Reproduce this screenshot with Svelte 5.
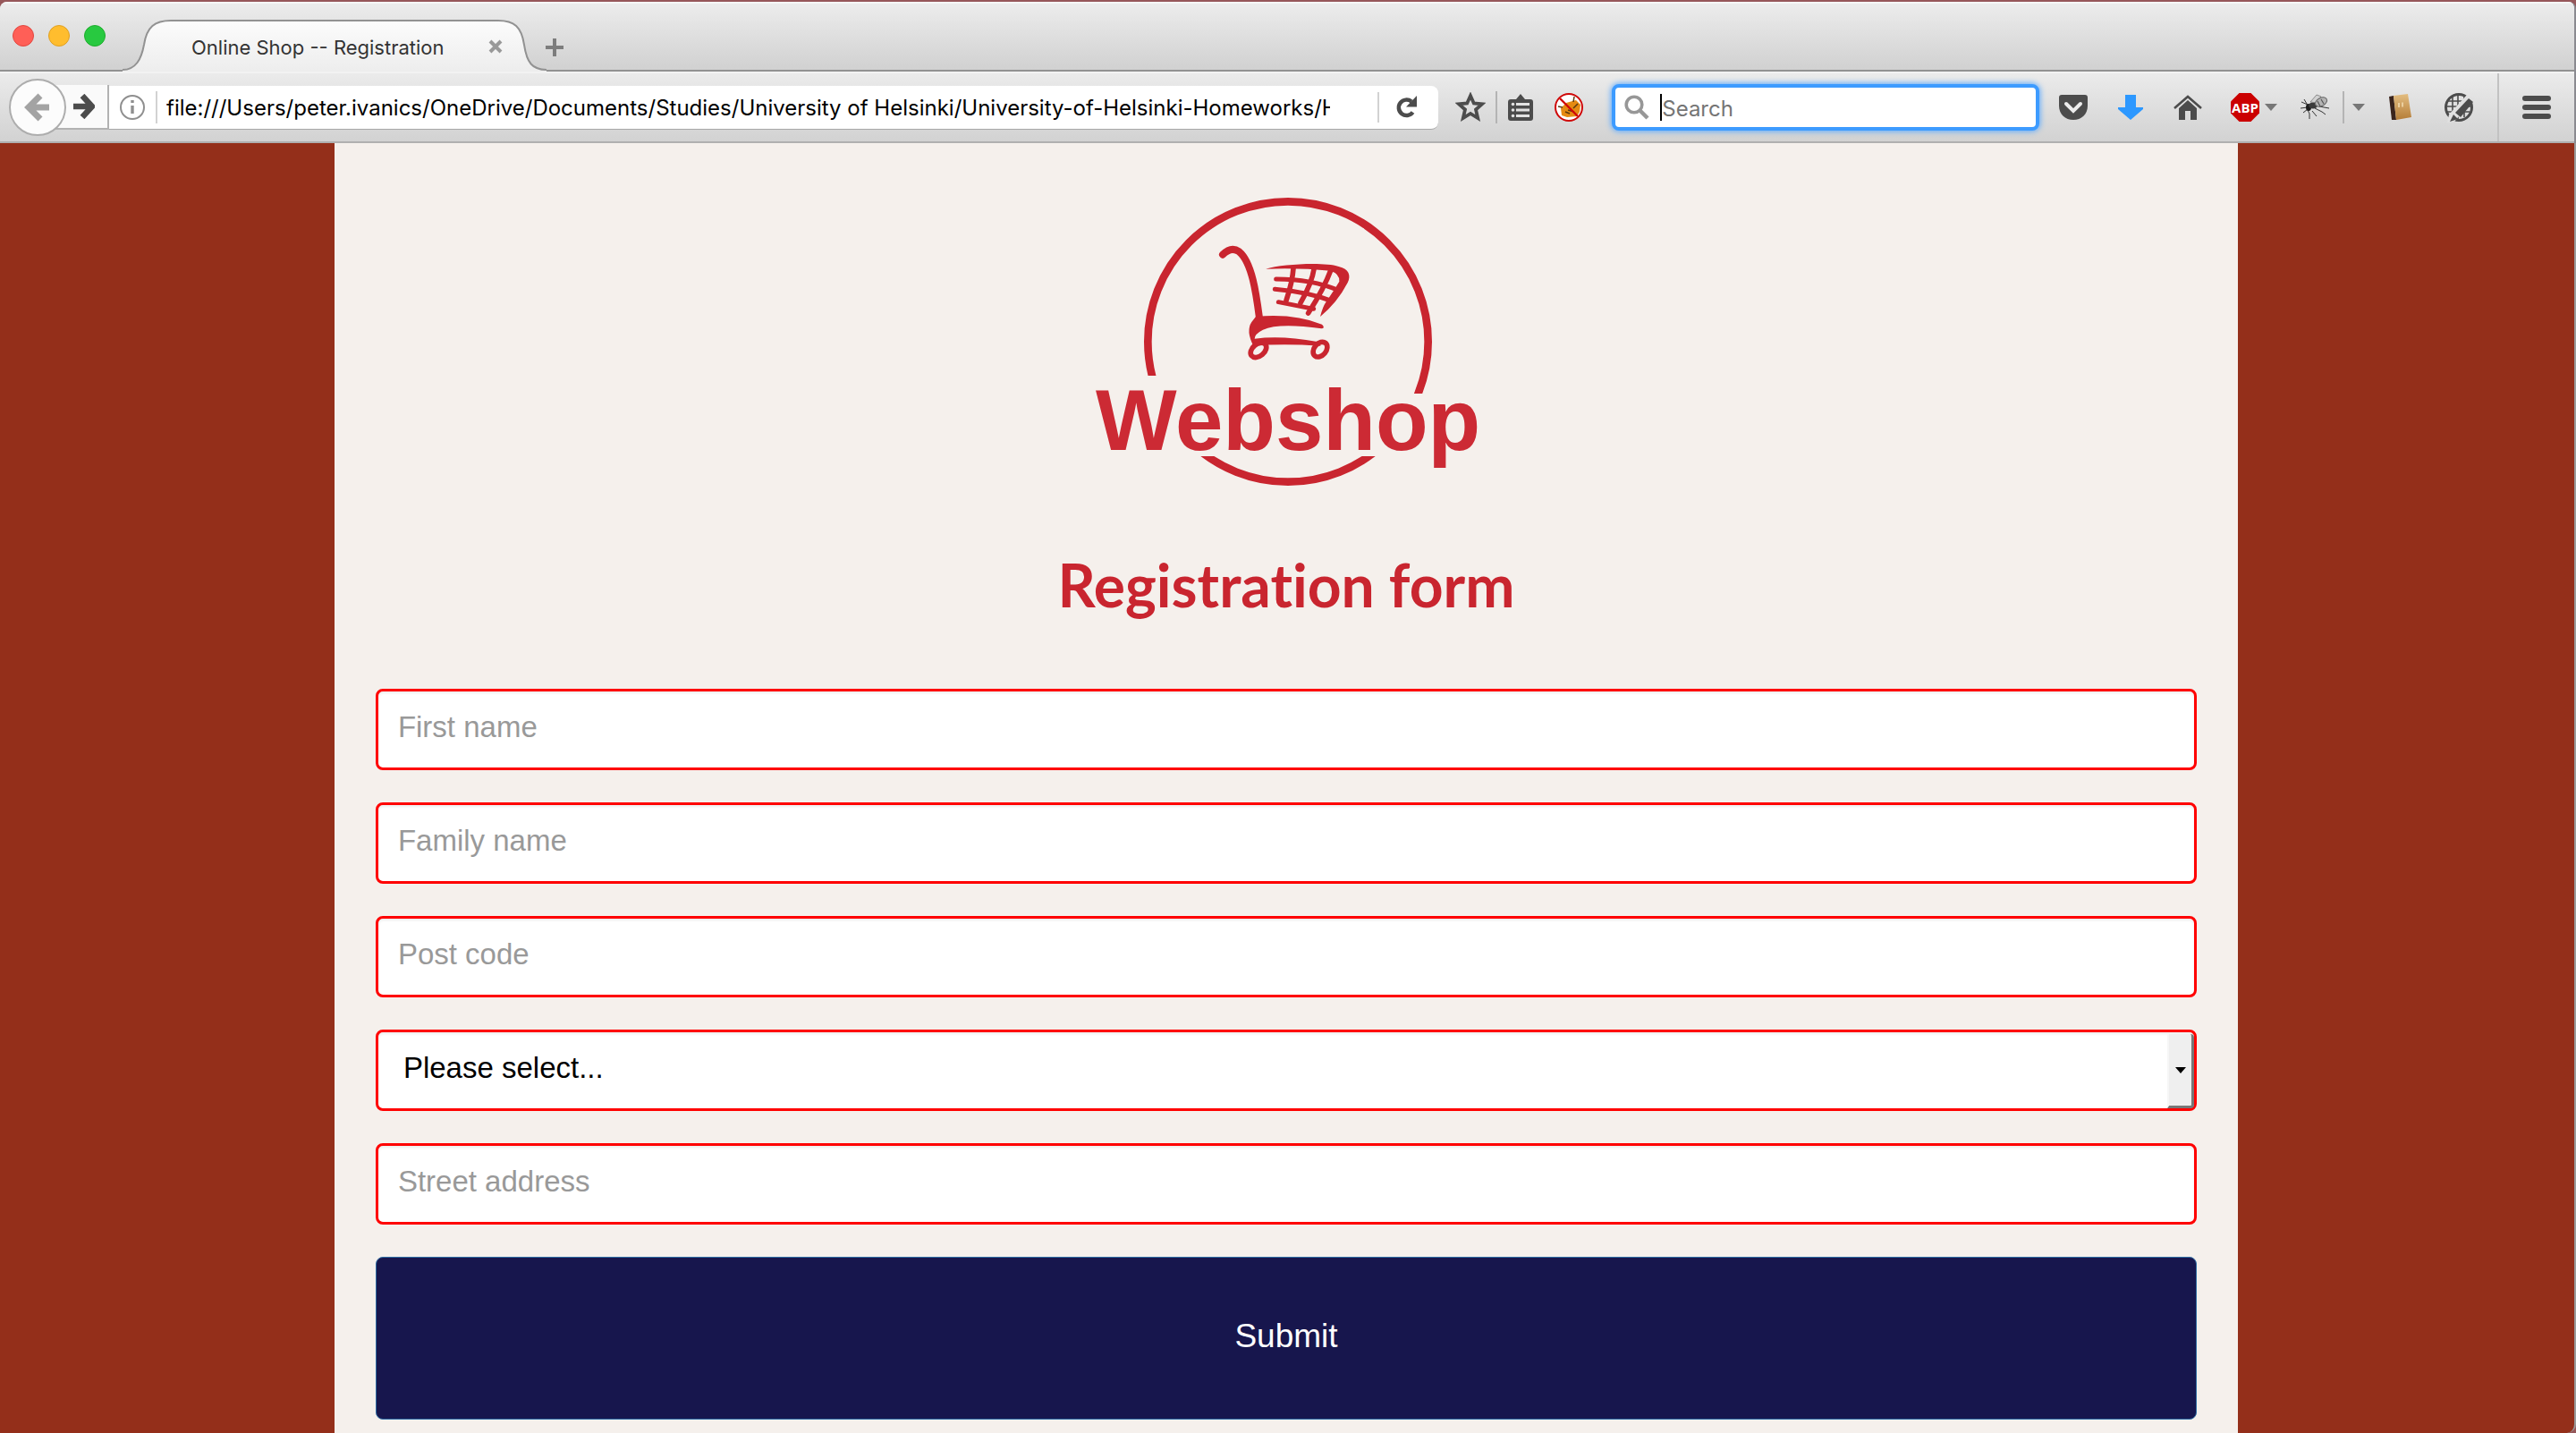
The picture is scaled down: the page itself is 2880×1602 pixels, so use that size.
<script>
  const fields = [
    { id: 'first', label: 'First name', kind: 'text' },
    { id: 'family', label: 'Family name', kind: 'text' },
    { id: 'post', label: 'Post code', kind: 'text' },
    { id: 'choice', label: 'Please select...', kind: 'select' },
    { id: 'street', label: 'Street address', kind: 'text' }
  ];
  const lights = [
    { name: 'Close window', cls: 'red' },
    { name: 'Minimise window', cls: 'amber' },
    { name: 'Zoom window', cls: 'green' }
  ];
  let address = $state(
    'file:///Users/peter.ivanics/OneDrive/Documents/Studies/University of Helsinki/University-of-Helsinki-Homeworks/Homework/registration.html'
  );
</script>

<div class="window">
  <header>
    <div class="tabs">
      <div class="lights">
        {#each lights as l}
          <button class="light {l.cls}" aria-label={l.name}></button>
        {/each}
      </div>
      <div class="tab">
        <svg class="tab-shape" viewBox="0 0 474 58" aria-hidden="true">
          <defs>
            <linearGradient id="tabfill" x1="0" y1="0" x2="0" y2="1">
              <stop offset="0" stop-color="#fcfcfc" />
              <stop offset="1" stop-color="#ededed" />
            </linearGradient>
          </defs>
          <path d="M0 58V56C15 56 21 44 24 28C27 8 36 1 54 1H420C438 1 446 8 449 28C452 48 458 56 474 56V58Z" fill="url(#tabfill)" />
          <path d="M0 56C15 56 21 44 24 28C27 8 36 1 54 1H420C438 1 446 8 449 28C452 48 458 56 474 56" fill="none" stroke="#929292" stroke-width="2" />
        </svg>
        <span class="tab-title">Online Shop -- Registration</span>
        <button class="tab-close" aria-label="Close tab">
          <svg width="16" height="16" viewBox="0 0 16 16"><path d="M2 2L14 14M14 2L2 14" stroke="#999" stroke-width="4" /></svg>
        </button>
      </div>
      <button class="new-tab" aria-label="New tab">
        <svg width="20" height="20" viewBox="0 0 20 20"><path d="M10 0V20M0 10H20" stroke="#7d7d7d" stroke-width="4" /></svg>
      </button>
    </div>

    <nav>
      <button class="back" aria-label="Back">
        <svg width="30" height="32" viewBox="0 0 30 32"><path d="M18 3L5 16L18 29M6 16H28" fill="none" stroke="#a3a3a3" stroke-width="7" /></svg>
      </button>
      <button class="forward" aria-label="Forward">
        <svg width="24" height="28" viewBox="0 0 24 28"><path d="M10 2L21 14L10 26M0 14H19" fill="none" stroke="#4c4c4c" stroke-width="6.5" /></svg>
      </button>
      <div class="url">
        <button class="info" aria-label="Site information">
          <svg width="28" height="28" viewBox="0 0 28 28"><circle cx="14" cy="14" r="13" fill="none" stroke="#8f8f8f" stroke-width="2" /><path d="M14 12V21M14 6V9" stroke="#8f8f8f" stroke-width="3.4" /></svg>
        </button>
        <input aria-label="Address" bind:value={address} />
        <button class="reload" aria-label="Reload">
          <svg width="26" height="26" viewBox="0 0 26 26"><path d="M18 6.5A8.7 8.7 0 1 0 19.5 18.5" fill="none" stroke="#4c4c4c" stroke-width="4.5" /><path d="M24 0V12.500H12Z" fill="#4c4c4c" /></svg>
        </button>
      </div>
      <button class="tool star" aria-label="Bookmark">
        <svg width="34" height="34" viewBox="0 0 34 34"><path d="M17 4L20.800 12.500L30 13.300L23 19.500L25.200 29L17 24L8.800 29L11 19.500L4 13.300L13.200 12.500Z" fill="none" stroke="#4c4c4c" stroke-width="3.800" /></svg>
      </button>
      <span class="rule"></span>
      <button class="tool list" aria-label="Bookmarks list">
        <svg width="28" height="32" viewBox="0 0 28 32"><path d="M3 7H9L14 1L19 7H25Q28 7 28 10V28Q28 31 25 31H3Q0 31 0 28V10Q0 7 3 7Z" fill="#4c4c4c" /><g fill="#e2e2e2"><rect x="9" y="11" width="15" height="3" /><rect x="9" y="17.500" width="15" height="3" /><rect x="9" y="24" width="15" height="3" /><circle cx="5.500" cy="12.500" r="1.800" /><circle cx="5.500" cy="19" r="1.800" /><circle cx="5.500" cy="25.500" r="1.800" /></g></svg>
      </button>
      <button class="tool block" aria-label="Blocked add-on">
        <svg width="32" height="32" viewBox="0 0 32 32"><circle cx="16" cy="16" r="15" fill="#fff" /><path d="M7 17L13 11L20 9L24 8L29 13L28 21L25 26L14 27L8 25Z" fill="#e58a12" /><path d="M4 15L9 16M22 4L21 10M12 21L17 23M21 17L26 12M15 19L22 21" stroke="#5a3a10" stroke-width="1.500" fill="none" /><circle cx="16" cy="16" r="15" fill="none" stroke="#cf0808" stroke-width="2" /><path d="M6 6L26 26" stroke="#cf0808" stroke-width="2.400" /></svg>
      </button>
      <label class="search">
        <svg width="28" height="28" viewBox="0 0 28 28" aria-hidden="true"><circle cx="11" cy="11" r="8.800" fill="none" stroke="#979797" stroke-width="3.600" /><path d="M17 17L26 26" stroke="#979797" stroke-width="4.500" /></svg>
        <span class="caret"></span>
        <input type="search" placeholder="Search" aria-label="Search" />
      </label>
      <button class="tool" aria-label="Pocket">
        <svg width="32" height="28" viewBox="0 0 32 28"><path d="M3 0H29Q32 0 32 3V12C32 22 25 28 16 28S0 22 0 12V3Q0 0 3 0Z" fill="#4c4c4c" /><path d="M8 10L16 18L24 10" fill="none" stroke="#ececec" stroke-width="4" stroke-linecap="round" /></svg>
      </button>
      <button class="tool" aria-label="Downloads">
        <svg width="28" height="28" viewBox="0 0 28 28"><path d="M8 0H20V14H28V16L14 28L0 16V14H8Z" fill="#2d98ff" /></svg>
      </button>
      <button class="tool" aria-label="Home">
        <svg width="32" height="28" viewBox="0 0 32 28"><path d="M1 15L16 2L31 15" fill="none" stroke="#4c4c4c" stroke-width="2.600" /><path d="M16 6L26 15V28H19V18H13V28H6V15Z" fill="#4c4c4c" /></svg>
      </button>
      <button class="tool abp" aria-label="Adblock Plus">
        <svg width="32" height="32" viewBox="0 0 32 32"><path d="M9.500 0H22.500L32 9.500V22.500L22.500 32H9.500L0 22.500V9.500Z" fill="#cb0000" /><text x="16" y="22" text-anchor="middle" class="abp-text">ABP</text></svg>
        <svg width="14" height="8" viewBox="0 0 14 8"><path d="M0 0H14L7 8Z" fill="#777" /></svg>
      </button>
      <button class="tool fly" aria-label="Firebug">
        <svg width="34" height="30" viewBox="0 0 34 30"><g fill="none" stroke="#333" stroke-width="1"><path d="M1 9L8 12M0 16L8 15M3 21L8 17M10 28L10 22L8 18M13 19L18 25M16 16L24 20L28 23M21 14L32 16M7 11L4 6" /></g><ellipse cx="9" cy="15" rx="3" ry="4" fill="#1c1c1c" /><ellipse cx="14" cy="13" rx="5" ry="3.500" fill="#3c3c3c" /><path d="M11 9L18 1L23 3L19 10Z" fill="#d2d2d2" stroke="#777" stroke-width="0.800" /><ellipse cx="23" cy="9" rx="7" ry="4.500" transform="rotate(-28 23 9)" fill="#b4b4b4" stroke="#666" /><path d="M19 8L22 14M23 6L26 11" stroke="#555" stroke-width="1.200" /></svg>
      </button>
      <span class="rule"></span>
      <button class="drop" aria-label="Firebug options">
        <svg width="14" height="8" viewBox="0 0 14 8"><path d="M0 0H14L7 8Z" fill="#777" /></svg>
      </button>
      <button class="tool" aria-label="Notebook">
        <svg width="28" height="30" viewBox="0 0 28 30"><defs><linearGradient id="cover" x1="0" y1="0" x2="0" y2="1"><stop offset="0" stop-color="#e3bd80" /><stop offset="1" stop-color="#b57d38" /></linearGradient></defs><path d="M0 3L5 2L8 29L3 29Z" fill="#3a241c" /><path d="M5 2L21 0L25 26L8 29Z" fill="url(#cover)" /><path d="M11 10V15M15 9.500V14.500" stroke="#f3deb5" stroke-width="1.500" /></svg>
      </button>
      <button class="tool" aria-label="Web editor">
        <svg width="34" height="34" viewBox="0 0 34 34"><circle cx="17" cy="17" r="14.500" fill="none" stroke="#4c4c4c" stroke-width="3" /><path d="M10 4V29M16 2V30M23 4V28M4 10H29M2 16H30M4 22H29" stroke="#4c4c4c" stroke-width="1.600" fill="none" /><path d="M34 7L12 33L4 34L6 25L26 3Z" fill="#e0e0e0" /><path d="M28 7L33 11L19 28L13 23Z" fill="#4c4c4c" /><path d="M11 25L16 30L7 33Z" fill="#4c4c4c" /></svg>
      </button>
      <button class="menu" aria-label="Menu">
        <svg width="32" height="26" viewBox="0 0 32 26"><g fill="#4c4c4c"><rect width="32" height="6" rx="3" /><rect y="10" width="32" height="6" rx="3" /><rect y="20" width="32" height="6" rx="3" /></g></svg>
      </button>
    </nav>
  </header>

  <div class="page">
    <main>
      <svg class="logo" viewBox="-6 0 1440 1080" role="img" aria-label="Webshop">
        <defs>
          <!-- keeps the ring clear of the wordmark -->
          <clipPath id="ring-gap">
            <path d="M0 0H1440V720H1000V660H0ZM0 930H1440V1080H0Z" />
          </clipPath>
        </defs>
        <circle cx="720" cy="546" r="470" fill="none" stroke="#c9252f" stroke-width="26" clip-path="url(#ring-gap)" />
        <g fill="none" stroke="#c9252f" stroke-linecap="round">
          <path d="M501 254Q530 225 556 244C600 280 614 390 624 466" stroke-width="24" />
          <path d="M738 300Q735 345 714 408M808 298Q800 350 762 416M866 300Q840 370 788 450" stroke-width="17" />
          <path d="M680 336Q800 336 890 374M676 370Q790 380 868 410M688 413L806 436" stroke-width="15" />
          <ellipse cx="621" cy="574" rx="30" ry="20" transform="rotate(-40 621 574)" stroke-width="17" />
          <ellipse cx="828" cy="572" rx="28" ry="20" transform="rotate(-50 828 572)" stroke-width="17" />
        </g>
        <g fill="#c9252f">
          <path d="M645 302C700 286 840 278 890 294C925 302 932 325 920 348Q886 414 828 462Q836 430 848 412Q874 374 892 344Q894 318 862 308Q760 298 645 302Z" />
          <path d="M612 462Q740 450 834 488Q846 500 832 502Q690 482 636 506Q608 520 608 536Q700 524 818 546L830 560Q700 552 604 560Q578 510 598 480Z" />
        </g>
        <text x="75" y="908" class="logo-text">Webshop</text>
      </svg>
      <h1>Registration form</h1>
      <form onsubmit={(e) => e.preventDefault()}>
        {#each fields as f}
          {#if f.kind === 'select'}
            <div class="select-wrap">
              <select id={f.id} aria-label="Selection">
                <option>{f.label}</option>
              </select>
              <span class="arrow" aria-hidden="true">
                <svg width="12" height="7" viewBox="0 0 12 7"><path d="M0 0H12L6 7Z" /></svg>
              </span>
            </div>
          {:else}
            <input class="field" id={f.id} type="text" placeholder={f.label} aria-label={f.label} />
          {/if}
        {/each}
        <button class="submit">Submit</button>
      </form>
    </main>
  </div>
</div>

<style>
  :global(body) {
    margin: 0;
    background: #96575a;
  }
  * {
    box-sizing: border-box;
  }
  button {
    border: 0;
    padding: 0;
    margin: 0;
    background: none;
    font: inherit;
    display: flex;
    align-items: center;
    justify-content: center;
    flex: none;
  }
  svg {
    display: block;
    flex: none;
  }
  .window {
    min-height: 100vh;
    padding-top: 2px;
    display: flex;
    flex-direction: column;
    font-family: Inter, 'Liberation Sans', sans-serif;
  }
  header {
    flex: none;
    border-radius: 8px 8px 0 0;
    overflow: hidden;
    background: #ececec;
    border-right: 2px solid #8a8a90;
  }
  .tabs {
    height: 78px;
    display: flex;
    align-items: flex-end;
    background: linear-gradient(#ececec, #d0d0d0);
    border-top: 2px solid #f6f6f6;
    box-shadow: inset 0 -2px #929292;
  }
  .lights {
    display: flex;
    gap: 16px;
    padding: 0 19px 28px 14px;
  }
  .light {
    width: 24px;
    height: 24px;
    border-radius: 50%;
    border: 1px solid #e2463f;
    background: #ff5f57;
  }
  .amber {
    background: #ffbd2e;
    border-color: #dfa023;
  }
  .green {
    background: #28c940;
    border-color: #1dad2b;
  }
  .tab {
    position: relative;
    width: 474px;
    height: 58px;
    display: flex;
    align-items: center;
    justify-content: space-between;
    padding: 4px 49px 0 77px;
  }
  .tab-shape {
    position: absolute;
    inset: 0;
    width: 100%;
    height: 100%;
  }
  .tab-title {
    position: relative;
    font-size: 22px;
    line-height: 28px;
    color: #333;
    white-space: nowrap;
  }
  .tab-close {
    position: relative;
    padding-bottom: 2px;
  }
  .new-tab {
    width: 18px;
    height: 54px;
  }
  nav {
    height: 80px;
    display: flex;
    align-items: center;
    background: linear-gradient(#ebebeb, #d2d2d2);
    border-top: 2px solid #f2f2f2;
    border-bottom: 2px solid #b0b0b0;
  }
  .back {
    position: relative;
    z-index: 1;
    width: 64px;
    height: 64px;
    margin-left: 10px;
    border: 2px solid #adadad;
    border-radius: 50%;
    background: #fcfcfc;
  }
  .forward {
    height: 50px;
    width: 64px;
    margin-left: -16px;
    padding-left: 10px;
    background: #fafafa;
    border-right: 2px solid #b2b2b2;
    border-bottom: 2px solid #b2b2b2;
  }
  .url {
    flex: 1;
    min-width: 0;
    height: 49px;
    display: flex;
    align-items: center;
    background: #fff;
    border-bottom: 1px solid #a8a8a8;
    border-radius: 0 8px 8px 0;
  }
  .info {
    width: 54px;
    height: 36px;
    border-right: 2px solid #d2d2d2;
  }
  .url input {
    flex: 1;
    min-width: 0;
    border: 0;
    padding: 2px 0 0;
    margin: 0 53px 0 10px;
    height: 42px;
    background: none;
    font: 24px/40px Inter, 'Liberation Sans', sans-serif;
    color: #000;
    outline: 0;
  }
  .reload {
    width: 68px;
    height: 34px;
    padding-right: 4px;
    border-left: 2px solid #d2d2d2;
  }
  .tool {
    width: 64px;
    height: 64px;
  }
  .star {
    width: 56px;
    margin-left: 8px;
  }
  .list {
    width: 52px;
  }
  .block {
    width: 56px;
  }
  .rule {
    flex: none;
    width: 2px;
    height: 36px;
    background: #b4b4b4;
  }
  .search {
    flex: none;
    width: 16.6%;
    height: 52px;
    margin: 0 6px 0 20px;
    border: 4px solid #3d9bff;
    border-radius: 8px;
    box-shadow: 0 0 6px 1px #5aa9ff;
    background: #fff;
    display: flex;
    align-items: center;
    padding-left: 10px;
  }
  .caret {
    width: 2px;
    height: 30px;
    margin-left: 12px;
    background: #000;
  }
  .search input {
    flex: 1;
    min-width: 0;
    border: 0;
    padding: 2px 0 0;
    height: 42px;
    background: none;
    outline: 0;
    font: 24px/40px Inter, 'Liberation Sans', sans-serif;
  }
  .search input::placeholder {
    color: #757575;
    opacity: 1;
  }
  .abp {
    width: 81px;
    justify-content: flex-start;
    padding-left: 16px;
    gap: 6px;
  }
  .abp-text {
    font: 700 15px 'Open Sans', sans-serif;
    fill: #fff;
  }
  .fly {
    width: 60px;
  }
  .drop {
    width: 32px;
    height: 64px;
  }
  .menu {
    width: 86px;
    height: 76px;
    margin-left: 11px;
    border-left: 2px solid #c2c2c2;
  }
  .page {
    flex: 1;
    display: flex;
    justify-content: center;
    background: #942f1a;
    border-right: 2px solid #9a9a9a;
    padding-right: 2px;
    border-radius: 0 0 10px 0;
  }
  main {
    width: 74%;
    background: #f5f0ec;
    padding: 40px 46px 15px;
    display: flex;
    flex-direction: column;
  }
  .logo {
    width: 480px;
    height: 360px;
    align-self: center;
  }
  .logo-text {
    font: 700 288px 'Liberation Sans', sans-serif;
    fill: #cc2a34;
  }
  h1 {
    margin: 48px 0 70px;
    text-align: center;
    font: 700 66px/92px Lato, sans-serif;
    font-variant-ligatures: none;
    color: #c9252f;
  }
  form {
    display: flex;
    flex-direction: column;
    gap: 36px;
    font-family: 'Liberation Sans', Arial, sans-serif;
  }
  .field,
  select {
    display: block;
    width: 100%;
    height: 91px;
    margin: 0;
    border: 3px solid #f00;
    border-radius: 8px;
    background: #fff;
    box-shadow: inset 0 2px 3px #00000013;
    font: 33px/40px 'Liberation Sans', Arial, sans-serif;
    color: #000;
    padding: 0 22px 6px;
    outline: 0;
  }
  .field::placeholder {
    color: #999;
    opacity: 1;
  }
  .select-wrap {
    position: relative;
  }
  select {
    appearance: none;
    padding-left: 28px;
  }
  .arrow {
    position: absolute;
    top: 5px;
    right: 3px;
    bottom: 3px;
    width: 30px;
    display: flex;
    align-items: center;
    justify-content: center;
    background: #efefef;
    border-right: 3px solid #777;
    border-bottom: 3px solid #777;
    border-left: 2px solid #f6f6f6;
    border-radius: 0 4px 4px 0;
    pointer-events: none;
  }
  .submit {
    height: 182px;
    padding-bottom: 4px;
    border: 1px solid #2e6da4;
    border-radius: 8px;
    background: #17164d;
    color: #fff;
    font-size: 37px;
  }
</style>
